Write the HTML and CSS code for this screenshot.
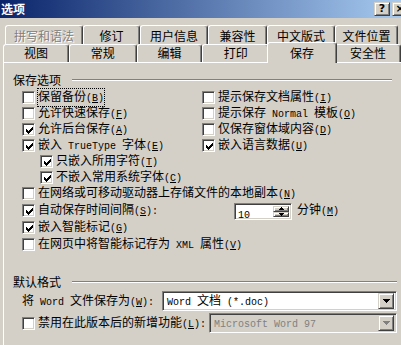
FILE: index.html
```html
<!DOCTYPE html>
<html lang="zh-CN">
  <head>
    <meta charset="UTF-8" />
    <title>选项</title>
    <link rel="stylesheet" href="styles.css">
  </head>
  <body>
    <div class="titlebar">
      <span class="title">选项</span>
      <div class="caption-btns">
        <span class="cap-btn">?</span>
        <span class="cap-btn">×</span>
      </div>
    </div>

    <div class="client">
      <div class="tab-row back">
        <div class="tab disabled">拼写和语法</div>
        <div class="tab">修订</div>
        <div class="tab">用户信息</div>
        <div class="tab">兼容性</div>
        <div class="tab">中文版式</div>
        <div class="tab">文件位置</div>
      </div>
      <div class="tab-row front">
        <div class="tab">视图</div>
        <div class="tab">常规</div>
        <div class="tab">编辑</div>
        <div class="tab">打印</div>
        <div class="tab active">保存</div>
        <div class="tab">安全性</div>
      </div>

      <div class="panel">
        <div class="group-title first">
          <span>保存选项</span>
          <i class="rule"></i>
        </div>

        <div class="opts">
          <div class="opts-grid">
            <div class="check">
              <span class="box"></span>
              <span class="text focus">保留备份<span class="en">(<u>B</u>)</span></span>
            </div>
            <div class="check">
              <span class="box"></span>
              <span class="text">提示保存文档属性<span class="en">(<u>I</u>)</span></span>
            </div>
            <div class="check">
              <span class="box"></span>
              <span class="text">允许快速保存<span class="en">(<u>F</u>)</span></span>
            </div>
            <div class="check">
              <span class="box"></span>
              <span class="text">提示保存<span class="en"> Normal </span>模板<span class="en">(<u>O</u>)</span></span>
            </div>
            <div class="check">
              <span class="box checked"><svg width="9" height="9" shape-rendering="crispEdges"><path d="M7 1h1v1h-1zM6 2h2v1h-2zM1 3h1v1h-1zM5 3h3v1h-3zM1 4h2v1h-2zM4 4h3v1h-3zM1 5h5v1h-5zM2 6h3v1h-3zM3 7h1v1h-1z"/></svg></span>
              <span class="text">允许后台保存<span class="en">(<u>A</u>)</span></span>
            </div>
            <div class="check">
              <span class="box"></span>
              <span class="text">仅保存窗体域内容<span class="en">(<u>D</u>)</span></span>
            </div>
            <div class="check">
              <span class="box checked"><svg width="9" height="9" shape-rendering="crispEdges"><path d="M7 1h1v1h-1zM6 2h2v1h-2zM1 3h1v1h-1zM5 3h3v1h-3zM1 4h2v1h-2zM4 4h3v1h-3zM1 5h5v1h-5zM2 6h3v1h-3zM3 7h1v1h-1z"/></svg></span>
              <span class="text">嵌入<span class="en"> TrueType </span>字体<span class="en">(<u>E</u>)</span></span>
            </div>
            <div class="check">
              <span class="box checked"><svg width="9" height="9" shape-rendering="crispEdges"><path d="M7 1h1v1h-1zM6 2h2v1h-2zM1 3h1v1h-1zM5 3h3v1h-3zM1 4h2v1h-2zM4 4h3v1h-3zM1 5h5v1h-5zM2 6h3v1h-3zM3 7h1v1h-1z"/></svg></span>
              <span class="text">嵌入语言数据<span class="en">(<u>U</u>)</span></span>
            </div>
          </div>

          <div class="check sub">
            <span class="box checked"><svg width="9" height="9" shape-rendering="crispEdges"><path d="M7 1h1v1h-1zM6 2h2v1h-2zM1 3h1v1h-1zM5 3h3v1h-3zM1 4h2v1h-2zM4 4h3v1h-3zM1 5h5v1h-5zM2 6h3v1h-3zM3 7h1v1h-1z"/></svg></span>
            <span class="text">只嵌入所用字符<span class="en">(<u>T</u>)</span></span>
          </div>
          <div class="check sub">
            <span class="box checked"><svg width="9" height="9" shape-rendering="crispEdges"><path d="M7 1h1v1h-1zM6 2h2v1h-2zM1 3h1v1h-1zM5 3h3v1h-3zM1 4h2v1h-2zM4 4h3v1h-3zM1 5h5v1h-5zM2 6h3v1h-3zM3 7h1v1h-1z"/></svg></span>
            <span class="text">不嵌入常用系统字体<span class="en">(<u>C</u>)</span></span>
          </div>
          <div class="check tall">
            <span class="box"></span>
            <span class="text">在网络或可移动驱动器上存储文件的本地副本<span class="en">(<u>N</u>)</span></span>
          </div>
          <div class="check tall">
            <span class="box checked"><svg width="9" height="9" shape-rendering="crispEdges"><path d="M7 1h1v1h-1zM6 2h2v1h-2zM1 3h1v1h-1zM5 3h3v1h-3zM1 4h2v1h-2zM4 4h3v1h-3zM1 5h5v1h-5zM2 6h3v1h-3zM3 7h1v1h-1z"/></svg></span>
            <span class="text spin-label">自动保存时间间隔<span class="en">(<u>S</u>):</span></span>
            <div class="spin">
              <span class="spin-value"><span class="en">10</span></span>
              <div class="spin-btns">
                <span class="spin-btn"><svg width="5" height="3" shape-rendering="crispEdges"><path d="M2 0h1v1h1v1h1v1h-5v-1h1v-1h1z"/></svg></span>
                <span class="spin-btn"><svg width="5" height="3" shape-rendering="crispEdges"><path d="M0 0h5v1h-1v1h-1v1h-1v-1h-1v-1h-1z"/></svg></span>
              </div>
            </div>
            <span class="text unit">分钟<span class="en">(<u>M</u>)</span></span>
          </div>
          <div class="check tall">
            <span class="box checked"><svg width="9" height="9" shape-rendering="crispEdges"><path d="M7 1h1v1h-1zM6 2h2v1h-2zM1 3h1v1h-1zM5 3h3v1h-3zM1 4h2v1h-2zM4 4h3v1h-3zM1 5h5v1h-5zM2 6h3v1h-3zM3 7h1v1h-1z"/></svg></span>
            <span class="text">嵌入智能标记<span class="en">(<u>G</u>)</span></span>
          </div>
          <div class="check tall">
            <span class="box"></span>
            <span class="text">在网页中将智能标记存为<span class="en"> XML </span>属性<span class="en">(<u>V</u>)</span></span>
          </div>
        </div>

        <div class="group-title second">
          <span>默认格式</span>
          <i class="rule"></i>
        </div>

        <div class="opts">
          <div class="field-row">
            <span class="field-label">将<span class="en"> Word </span>文件保存为<span class="en">(<u>W</u>):</span></span>
            <div class="combo wide">
              <span class="combo-text"><span class="en">Word </span>文档<span class="en"> (*.doc)</span></span>
              <span class="combo-btn"><svg width="7" height="4" shape-rendering="crispEdges"><path d="M0 0h7v1h-1v1h-1v1h-1v1h-1v-1h-1v-1h-1v-1h-1z"/></svg></span>
            </div>
          </div>
          <div class="field-row">
            <div class="check compat">
              <span class="box"></span>
              <span class="text">禁用在此版本后的新增功能<span class="en">(<u>L</u>):</span></span>
            </div>
            <div class="combo narrow disabled">
              <span class="combo-text"><span class="en">Microsoft Word 97</span></span>
              <span class="combo-btn"><svg width="7" height="4" shape-rendering="crispEdges"><path d="M0 0h7v1h-1v1h-1v1h-1v1h-1v-1h-1v-1h-1v-1h-1z"/></svg></span>
            </div>
          </div>
        </div>
      </div>
    </div>
  </body>
</html>
```

FILE: styles.css
```css
body {
  margin: 0;
  width: 401px;
  height: 345px;
  overflow: hidden;
  background: #d4d0c8;
  color: #000;
  font: 12px/14px "Noto Sans CJK SC", sans-serif;
}

.en {
  font-family: "Liberation Mono", monospace;
  font-size: 10px;
  white-space: pre;
}

/* title bar */

.titlebar {
  height: 18px;
  display: flex;
  align-items: center;
  padding-left: 1px;
  overflow: hidden;
  background: linear-gradient(to right, #0a246a, #a6caf0);
}

.title {
  color: #fff;
  font-weight: bold;
}

.caption-btns {
  margin-left: auto;
  margin-right: -7px;
  display: flex;
  gap: 2px;
}

.cap-btn {
  width: 16px;
  height: 14px;
  box-sizing: border-box;
  background: #d4d0c8;
  border: 1px solid;
  border-color: #d4d0c8 #404040 #404040 #d4d0c8;
  box-shadow: inset 1px 1px #fff, inset -1px -1px #808080;
  font: bold 11px/12px "DejaVu Sans", sans-serif;
  text-align: center;
}

/* tabs */

.client {
  padding: 7px 0 0 3px;
}

.tab-row {
  display: flex;
}

.tab {
  box-sizing: border-box;
  border: 1px solid;
  border-bottom: none;
  border-color: #fff #404040 transparent #fff;
  border-radius: 3px 3px 0 0;
  box-shadow: inset -1px 0 #808080;
  background: #d4d0c8;
  text-align: center;
}

.tab-row.back {
  margin-left: 2px;
}

.back .tab {
  height: 19px;
  padding-top: 2px;
  line-height: 15px;
}

.back .tab:nth-child(1) { width: 78px; }
.back .tab:nth-child(2) { width: 57px; }
.back .tab:nth-child(3) { width: 68px; }
.back .tab:nth-child(4) { width: 59px; }
.back .tab:nth-child(5) { width: 68px; }
.back .tab:nth-child(6) { width: 63px; }

.tab.disabled {
  color: #808080;
  text-shadow: 1px 1px #fff;
}

.tab-row.front {
  height: 20px;
  margin-top: -2px;
  align-items: flex-start;
}

.front .tab {
  height: 18px;
  margin-top: 2px;
  line-height: 16px;
}

.front .tab:nth-child(1) { width: 66px; }
.front .tab:nth-child(2) { width: 68px; }
.front .tab:nth-child(3) { width: 66px; }
.front .tab:nth-child(4) { width: 67px; }
.front .tab:nth-child(6) { width: 66px; flex-shrink: 0; }

.front .tab.active {
  position: relative;
  z-index: 1;
  width: 70px;
  height: 21px;
  margin: 0 -2px;
  padding-top: 2px;
}

/* panel */

.panel {
  height: 283px;
  border-top: 1px solid #fff;
  border-left: 1px solid #fff;
  padding: 0 4px 0 9px;
}

.group-title {
  display: flex;
  align-items: center;
  height: 14px;
}

.group-title.first {
  margin-top: 10px;
}

.group-title.second {
  margin-top: 22px;
}

.rule {
  flex: 1;
  margin-left: 11px;
  border-top: 1px solid #808080;
  border-bottom: 1px solid #fff;
}

.first .rule {
  margin-right: 5px;
}

.opts {
  padding-left: 9px;
}

.group-title.first + .opts {
  margin-top: 2px;
}

.opts-grid {
  display: grid;
  grid-template-columns: 180px 1fr;
  grid-auto-rows: 16px;
}

.check {
  display: flex;
  align-items: center;
  height: 16px;
}

.check.tall {
  height: 17px;
}

.check.sub {
  padding-left: 18px;
}

.box {
  width: 13px;
  height: 13px;
  flex-shrink: 0;
  box-sizing: border-box;
  padding: 1px;
  background: #fff;
  border: 1px solid;
  border-color: #808080 #fff #fff #808080;
  box-shadow: inset 1px 1px #404040, inset -1px -1px #d4d0c8;
}

.box svg {
  display: block;
  margin: 1px 0 0 1px;
}

.text {
  margin-left: 3px;
  white-space: nowrap;
}

.text.focus {
  margin-left: 2px;
  border: 1px dotted #000;
}

.spin-label {
  width: 196px;
}

/* spin box */

.spin {
  display: flex;
  width: 58px;
  height: 17px;
  margin-top: 2px;
  box-sizing: border-box;
  padding: 2px;
  background: #fff;
  border: 1px solid;
  border-color: #808080 #fff #fff #808080;
  box-shadow: inset 1px 1px #404040, inset -1px -1px #d4d0c8;
}

.spin-value {
  flex: 1;
  padding-left: 1px;
  line-height: 13px;
}

.spin-btns {
  display: flex;
  flex-direction: column;
  width: 16px;
}

.spin-btn {
  flex: 1;
  display: flex;
  align-items: center;
  justify-content: center;
  box-sizing: border-box;
  background: #d4d0c8;
  border: 1px solid;
  border-color: #d4d0c8 #404040 #404040 #d4d0c8;
  box-shadow: inset 1px 1px #fff, inset -1px -1px #808080;
}

.spin-btn svg {
  display: block;
}

.unit {
  margin-left: 5px;
}

/* default format */

.field-row {
  display: flex;
  align-items: center;
  height: 20px;
  margin-top: 2px;
}

.field-label {
  width: 140px;
  white-space: nowrap;
}

.check.compat {
  width: 187px;
}

.combo {
  display: flex;
  align-items: center;
  height: 20px;
  box-sizing: border-box;
  padding: 2px;
  background: #fff;
  border: 1px solid;
  border-color: #808080 #fff #fff #808080;
  box-shadow: inset 1px 1px #404040, inset -1px -1px #d4d0c8;
}

.combo.wide {
  width: 235px;
}

.combo.narrow {
  width: 188px;
}

.combo-text {
  flex: 1;
  padding-left: 2px;
  white-space: nowrap;
}

.combo-btn {
  width: 16px;
  height: 16px;
  display: flex;
  align-items: center;
  justify-content: center;
  box-sizing: border-box;
  background: #d4d0c8;
  border: 1px solid;
  border-color: #d4d0c8 #404040 #404040 #d4d0c8;
  box-shadow: inset 1px 1px #fff, inset -1px -1px #808080;
}

.combo.disabled {
  background: #d4d0c8;
  color: #808080;
}

.combo.disabled svg {
  fill: #808080;
}
```
